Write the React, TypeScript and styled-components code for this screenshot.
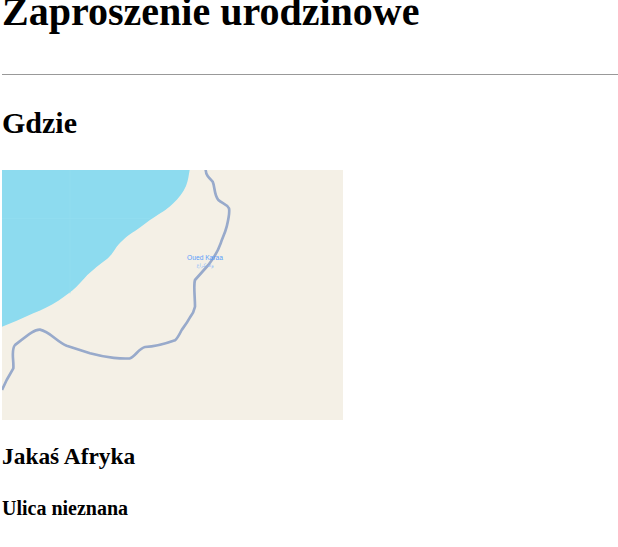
import React from "react"
import styled, { createGlobalStyle } from "styled-components"

const GlobalStyle = createGlobalStyle`
	html, body {
		margin: 0;
		padding: 0;
		background: #fff;
		overflow: hidden;
	}
	body {
		font-family: "Liberation Serif", "Times New Roman", serif;
		color: #000;
	}
`

const Page = styled.div`
	display: flex;
	flex-direction: column;
	align-items: flex-start;
	padding-left: 2px;
`

const Title = styled.h1`
	margin: -11px 0 0;
	font-size: 40px;
	line-height: 46px;
	font-weight: bold;
`

const Divider = styled.hr`
	align-self: stretch;
	height: 1px;
	margin: 39px 0 0;
	border: none;
	background: #999;
`

const Heading = styled.h2`
	margin: 31px 0 0;
	font-size: 30px;
	line-height: 34px;
	font-weight: bold;
`

const MapBox = styled.div`
	width: 341px;
	height: 250px;
	margin-top: 30px;
	background: #f4f0e6;
`

const MapSvg = styled.svg`
	display: block;
	width: 100%;
	height: 100%;
`

const PlaceName = styled.text`
	font-family: "Liberation Sans", Arial, sans-serif;
	font-size: 20px;
	fill: #5a9dfb;
`

const PlaceNameLocal = styled.text`
	font-family: "DejaVu Sans", sans-serif;
	font-size: 15px;
	fill: #8cbafa;
`

const City = styled.h3`
	margin: 23px 0 0;
	font-size: 23.4px;
	line-height: 27px;
	font-weight: bold;
`

const Street = styled.h4`
	margin: 27px 0 0;
	font-size: 20px;
	line-height: 23px;
	font-weight: bold;
`

const water =
	"M6 30 L569 30 C566 45 565 60 558 78 C550 98 535 115 520 130 C505 145 490 155 465 170 C445 182 425 200 405 213 C385 224 365 243 350 260 C340 275 335 285 322 296 C300 312 280 328 262 345 C250 358 240 370 228 382 C215 395 195 408 175 422 C150 438 125 450 100 460 L50 482 L6 500 Z"

const road =
	"M617 30 C618 45 625 52 638 65 C645 80 642 105 655 120 C665 130 680 132 687 145 C690 160 686 175 680 200 C675 220 668 232 662 250 C655 270 645 290 625 315 L585 360 C580 375 585 410 585 440 C582 455 578 462 570 472 C560 490 552 500 545 510 C535 530 532 536 525 541 C500 550 470 560 435 561 C418 564 405 590 390 595 C370 597 320 594 270 580 L200 557 C170 545 150 515 120 509 C105 508 90 520 45 555 C32 570 42 600 40 625 L20 660 L6 690"

const App = () => {
	return (
		<Page>
			<GlobalStyle />
			<Title>Zaproszenie urodzinowe</Title>
			<Divider />
			<Heading>Gdzie</Heading>
			<MapBox>
				<MapSvg viewBox="6 30 1023 750">
					<defs>
						<filter id="soft">
							<feGaussianBlur stdDeviation="1" />
						</filter>
					</defs>
					<path d={water} fill="#8ddbef" filter="url(#soft)" />
					<path d="M210 30 L210 400 M6 176 L450 176" stroke="#96def0" strokeWidth="2" fill="none" />
					<path d={road} fill="none" stroke="#98aacb" strokeWidth="8" strokeLinejoin="round" filter="url(#soft)" />
					<PlaceName x="615" y="300" textAnchor="middle">
						Oued Karaa
					</PlaceName>
					<PlaceNameLocal x="615" y="320" textAnchor="middle">
						واد كراع
					</PlaceNameLocal>
				</MapSvg>
			</MapBox>
			<City>Jakaś Afryka</City>
			<Street>Ulica nieznana</Street>
		</Page>
	)
}

export default App
